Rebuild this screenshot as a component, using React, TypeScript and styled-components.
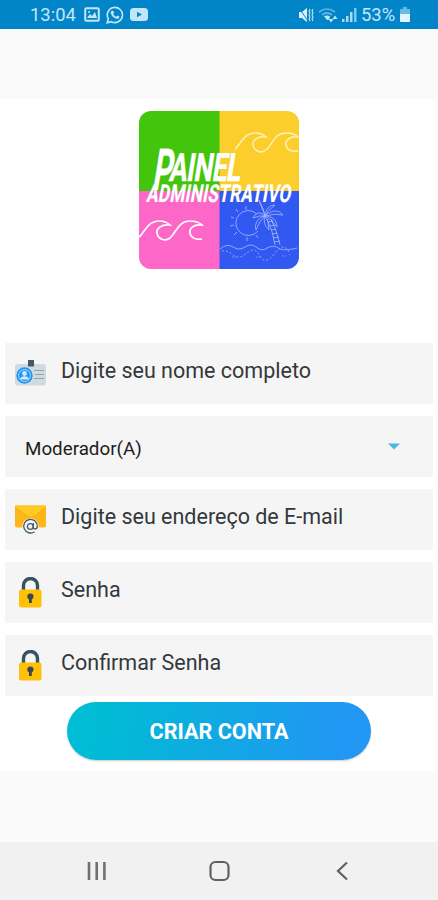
import React from "react";
import styled, { createGlobalStyle } from "styled-components";

const GlobalStyle = createGlobalStyle`
  * { box-sizing: border-box; }
  body { margin: 0; background: #fafafa; }
`;

const Screen = styled.div`
  display: flex;
  flex-direction: column;
  width: 438px;
  height: 900px;
  overflow: hidden;
  background: #fafafa;
  font-family: Roboto, "Noto Sans", sans-serif;
`;

const StatusBar = styled.header`
  display: flex;
  justify-content: space-between;
  align-items: center;
  height: 29px;
  padding: 0 28px 0 30px;
  background: #0285c8;
  color: #c3e5f8;
  font-size: 18.4px;
  flex: none;
`;

const StatusGroup = styled.div<{ $gap: number }>`
  display: flex;
  align-items: center;
  gap: ${(p) => p.$gap}px;
  svg { display: block; }
`;

const StatusText = styled.span<{ $width: number }>`
  width: ${(p) => p.$width}px;
  white-space: nowrap;
`;

const Content = styled.main`
  display: flex;
  flex-direction: column;
  align-items: center;
  height: 672px;
  margin-top: 70px;
  padding: 12px 5px 0;
  background: #fff;
  flex: none;
`;

const Logo = styled.svg`
  display: block;
  width: 160px;
  height: 158px;
  overflow: visible;
  flex: none;
`;

const LogoText = styled.text`
  fill: #fff;
  stroke: #fff;
  font-family: Roboto, sans-serif;
  font-weight: 700;
`;

const Form = styled.form`
  display: flex;
  flex-direction: column;
  gap: 12px;
  width: 428px;
  margin-top: 74px;
`;

const Field = styled.label`
  display: flex;
  align-items: center;
  height: 61px;
  padding-left: 9px;
  background: #f5f5f5;
  svg { display: block; flex: none; }
`;

const FieldText = styled.span`
  margin: -5px 0 0 15px;
  color: #34383b;
  font-size: 21.5px;
  line-height: 28px;
  white-space: nowrap;
`;

const SelectField = styled(Field)`
  justify-content: space-between;
  padding: 4px 33px 0 20px;
  color: #202020;
  font-size: 18.8px;
  svg { margin-top: -5px; }
`;

const SubmitButton = styled.button`
  width: 304px;
  height: 58px;
  margin: 6px 0 0;
  padding: 1px 0 0;
  border: 0;
  border-radius: 29px;
  background: linear-gradient(100deg, #00bcd4 10%, #2196f3 90%);
  box-shadow: 0 1px 2px rgba(0, 0, 0, 0.2);
  color: #fff;
  font: 700 21.6px Roboto, sans-serif;
  flex: none;
`;

const NavBar = styled.nav`
  display: flex;
  align-items: center;
  justify-content: space-between;
  height: 58px;
  margin-top: auto;
  padding: 0 85px 0 83px;
  background: #f1f1f1;
  flex: none;
  svg { display: block; }
`;

const wave =
  "M0 17 C4 15 8 1 20 1 C26 1 29 3 31 5 C22 4 17 9 18 13 C19 19 26 22 31 18 C38 12 39 1 51 1 C57 1 61 3 63 5 C54 4 50 9 51 13 C52 18 57 20 63 19";

function PanelLogo() {
  return (
    <Logo viewBox="0 0 160 158" role="img" aria-label="Painel Administrativo">
      <defs>
        <clipPath id="tile"><rect width="160" height="158" rx="12" /></clipPath>
      </defs>
      <g clipPath="url(#tile)">
        <rect width="81" height="80" fill="#43c50b" />
        <rect x="80.5" width="80" height="80" fill="#fbce2b" />
        <rect y="80" width="81" height="78" fill="#fd67c8" />
        <rect x="80.5" y="80" width="80" height="78" fill="#3159f2" />
        <g fill="none">
          <path d={wave} transform="translate(96 21)" stroke="#fff0b8" strokeWidth="1.5" />
          <path d={wave} transform="translate(0 109)" stroke="#fff" strokeWidth="1.7" />
        </g>
        <g fill="none" stroke="#a9baff" strokeWidth="0.8">
          <path d="M118 103 A12.5 12.5 0 1 0 119 120" />
          <path d="M107 95v4 M97 98l2 3 M92 106l3 1 M91 115l4-1 M95 124l3-3 M108 130v-4 M119 127l-2-3" />
          <path d="M126 105 C120 99 116 103 114 107 Q121 104 126 105 C119 106 115 113 117 119 Q120 110 126 105 C124 111 126 115 130 119 Q130 110 126 105 C133 105 138 109 138 116 Q133 108 126 105 C134 98 140 99 144 104 Q136 102 126 105 C127 97 131 94 136 94 Q129 99 126 105 C124 98 121 94 120 89 Q125 98 126 105" />
          <path d="M128 108 Q134 120 136 134 M132 108 Q138 120 141 134 M129 111l5-1 M131 115l5-1 M132 119l5-1 M133 123l5-1 M134 127l6-1 M135 131l6-1" />
          <path d="M81 138 Q88 132 94 136 Q100 140 106 136 Q112 132 117 136 Q123 141 128 137 Q135 133 141 138 Q147 140 158 137" />
          <path d="M83 140 Q88 139 94 144 T108 142 T121 145 T136 142 T151 144" strokeDasharray="2 2" />
          <path d="M93 146h5 M117 146h5 M143 145h5" strokeDasharray="1 1.5" />
        </g>
      </g>
      <LogoText transform="translate(12.5 79) skewX(-9) scale(.52 1)" fontSize="58" strokeWidth="0.2">P</LogoText>
      <LogoText transform="translate(29.5 70) skewX(-9) scale(.68 1)" fontSize="39" strokeWidth="0.4" textLength="105">AINEL</LogoText>
      <LogoText transform="translate(7 90.5) skewX(-10) scale(.7 1)" fontSize="24.5" strokeWidth="0.2" textLength="206">ADMINISTRATIVO</LogoText>
    </Logo>
  );
}

function BadgeIcon() {
  return (
    <svg width="32" height="32" viewBox="0 0 32 32">
      <rect x="1" y="6" width="31" height="21.5" rx="3" fill="#cfdbe1" />
      <rect x="14" y="2" width="6" height="6.5" fill="#455a64" />
      <circle cx="10.5" cy="17.5" r="8.2" fill="#2196f3" />
      <circle cx="10.5" cy="17.5" r="6" fill="none" stroke="#a8d8fa" strokeWidth="1" />
      <circle cx="10.5" cy="15.5" r="2.4" fill="#d2eaff" />
      <path d="M6 21.5 Q6.5 18.3 10.5 18.3 Q14.5 18.3 15 21.5Z" fill="#d2eaff" />
      <path d="M20 12.5h10M21 16.5h9M20 20.5h10" stroke="#93a3ab" />
    </svg>
  );
}

function MailIcon() {
  return (
    <svg width="32" height="32" viewBox="0 0 32 32">
      <rect x="1" y="1.5" width="31" height="22" rx="2" fill="#ffb618" />
      <path d="M1 3 L17 14 L32 3 V1.5H1Z" fill="#ffca28" />
      <path d="M1 3L14 13Q17 15 20 13L32 3" fill="none" stroke="#f8a900" strokeWidth="0.8" />
      <circle cx="16.5" cy="22.5" r="8.3" fill="#f5f5f5" />
      <path d="M20.5 27.7A6.8 6.8 0 1 1 23.3 22.5c0 3-4 3.5-4 .5v-4" fill="none" stroke="#455a64" strokeWidth="1.3" />
      <circle cx="16.3" cy="22.5" r="2.9" fill="none" stroke="#455a64" strokeWidth="1.3" />
    </svg>
  );
}

function LockIcon() {
  return (
    <svg width="32" height="32" viewBox="0 0 32 32">
      <path d="M9.5 14V8.5a7 7 0 0 1 14 0V14" fill="none" stroke="#37535e" strokeWidth="3.4" />
      <rect x="5" y="12.5" width="22.5" height="18" rx="2.2" fill="#ffc107" />
      <circle cx="16.4" cy="19.5" r="3.1" fill="#37474f" />
      <path d="M15 20h2.8v6H15z" fill="#37474f" />
    </svg>
  );
}

export default function App() {
  return (
    <>
      <GlobalStyle />
      <Screen>
        <StatusBar>
          <StatusGroup $gap={6}>
            <StatusText $width={48}>13:04</StatusText>
            <svg width="16" height="15" viewBox="0 0 16 15">
              <rect x="1.2" y="1.2" width="13.6" height="12.6" rx="1" fill="none" stroke="#c3e5f8" strokeWidth="2" />
              <path d="M3 11l3-4 2 2 3-4 2 6z" fill="#c3e5f8" /><circle cx="5" cy="5" r="1" fill="#c3e5f8" />
            </svg>
            <svg width="18" height="18" viewBox="0 0 18 18">
              <path d="M1.2 16.8l1.1-4a7.6 7.6 0 1 1 3 2.9z" fill="none" stroke="#c3e5f8" strokeWidth="1.6" />
              <path d="M6 4.7l1.4.2.7 2-.9 1.1c.8 1.5 1.7 2.2 3 2.8l1.1-1.2 2 .9c.1 2-1.4 2.7-3 2.2C7.5 12 5.5 9.8 4.8 7.3 4.5 6.2 5 5.2 6 4.7Z" fill="#c3e5f8" />
            </svg>
            <svg width="18" height="13" viewBox="0 0 18 13">
              <rect width="18" height="13" rx="3.5" fill="#c3e5f8" /><path d="M7 3.8v5.4l5-2.7z" fill="#0285c8" />
            </svg>
          </StatusGroup>
          <StatusGroup $gap={4}>
            <svg width="16" height="16" viewBox="0 0 16 16">
              <path d="M1 5h3l5-4v14l-5-4H1z" fill="#d9f0fc" />
              <path d="M1 1l9 13" stroke="#0285c8" />
              <path d="M12 2l-1 2 1 2-1 2 1 2-1 2 1 2M15 2l-1 2 1 2-1 2 1 2-1 2 1 2" fill="none" stroke="#c3e5f8" strokeWidth="1.1" />
            </svg>
            <svg width="20" height="16" viewBox="0 0 20 16">
              <g fill="none" stroke="#5fb3e0" strokeWidth="1.7"><path d="M1 5Q9-1 17 5M4 8q5-4 10 0" /></g>
              <path d="M6 9.5q3-2 6 0l-1 3-2 .5z" fill="#c3e5f8" />
              <path d="M10.5 12h5l-2.5 3.5zM14.500 12l2.500-3.500 2.500 3.500z" fill="#c3e5f8" />
            </svg>
            <svg width="15" height="15" viewBox="0 0 15 15">
              <path d="M0 12h2.5v3H0zM4 9h2.500v6H4zM8 5h2.500v10H8z" fill="#a9daf4" /><path d="M12 1h2.500v14H12z" fill="#83c7ec" />
            </svg>
            <StatusText $width={35}>53%</StatusText>
            <svg width="10" height="15" viewBox="0 0 10 15">
              <path d="M3 0h4v2h3v5H0V2h3z" fill="#69b9e3" /><path d="M0 7h10v7q0 1-1 1H1q-1 0-1-1z" fill="#e0f3ff" />
            </svg>
          </StatusGroup>
        </StatusBar>
        <Content>
          <PanelLogo />
          <Form>
            <Field><BadgeIcon /><FieldText>Digite seu nome completo</FieldText></Field>
            <SelectField as="div">
              <span>Moderador(A)</span>
              <svg width="12" height="7" viewBox="0 0 12 7"><path d="M0 0.5h12L6 6.5z" fill="#4db6e6" /></svg>
            </SelectField>
            <Field><MailIcon /><FieldText>Digite seu endereço de E-mail</FieldText></Field>
            <Field><LockIcon /><FieldText>Senha</FieldText></Field>
            <Field><LockIcon /><FieldText>Confirmar Senha</FieldText></Field>
          </Form>
          <SubmitButton type="button">CRIAR CONTA</SubmitButton>
        </Content>
        <NavBar>
          <svg width="28" height="20" viewBox="0 0 28 20"><path d="M6 1v18M13.7 1v18M21.4 1v18" stroke="#717171" strokeWidth="2.6" /></svg>
          <svg width="26" height="22" viewBox="0 0 26 22"><rect x="1.5" y="2" width="18" height="18" rx="5" fill="none" stroke="#606060" strokeWidth="2.2" /></svg>
          <svg width="20" height="20" viewBox="0 0 20 20"><path d="M14 1.5L5 10l9 8.5" fill="none" stroke="#606060" strokeWidth="2.2" /></svg>
        </NavBar>
      </Screen>
    </>
  );
}
